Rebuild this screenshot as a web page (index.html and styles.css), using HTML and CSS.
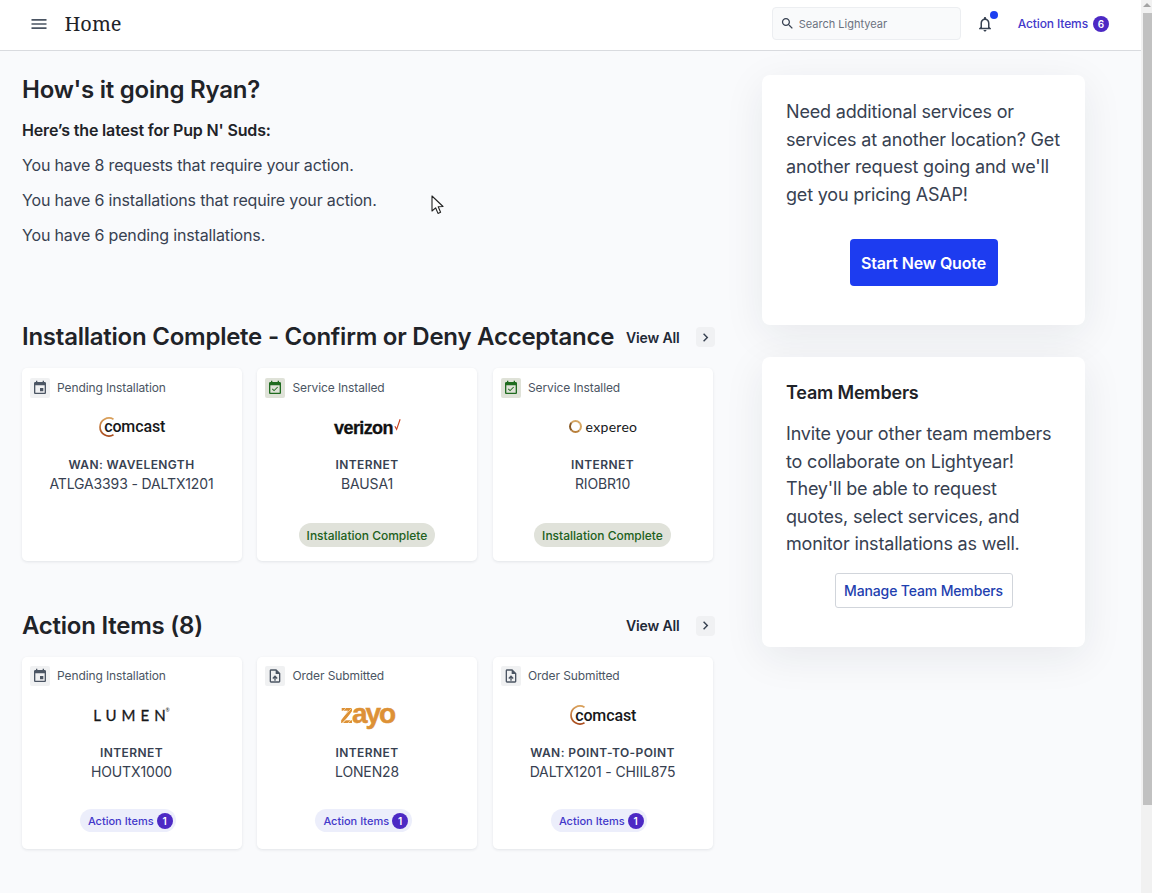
FILE: index.html
```html
<!DOCTYPE html>
<html lang="en">
<head>
<meta charset="utf-8">
<title>Home</title>
<link rel="stylesheet" href="styles.css">
</head>
<body>
<svg class="defs" width="0" height="0" aria-hidden="true">
  <defs>
    <linearGradient id="arc-grad" x1="0" y1="0" x2="0" y2="1"><stop offset="0" stop-color="#d9a05a"/><stop offset="1" stop-color="#a84a1c"/></linearGradient>
  </defs>
  <symbol id="i-event" viewBox="0 0 24 24"><path d="M17 12h-5v5h5v-5zM16 1v2H8V1H6v2H5c-1.11 0-1.99.9-1.99 2L3 19c0 1.1.89 2 2 2h14c1.1 0 2-.9 2-2V5c0-1.1-.9-2-2-2h-1V1h-2zm3 18H5V8h14v11z"/></symbol>
  <symbol id="i-done" viewBox="0 0 24 24"><path d="M16.53 11.06L15.47 10l-4.88 4.88-2.12-2.12-1.06 1.06L10.59 17l5.94-5.94zM19 3h-1V1h-2v2H8V1H6v2H5c-1.11 0-1.99.9-1.99 2L3 19c0 1.1.89 2 2 2h14c1.1 0 2-.9 2-2V5c0-1.1-.9-2-2-2zm0 16H5V8h14v11z"/></symbol>
  <symbol id="i-upload" viewBox="0 0 24 24"><path d="M14 2H6c-1.1 0-1.99.9-1.99 2L4 20c0 1.1.89 2 1.99 2H18c1.1 0 2-.9 2-2V8l-6-6zm4 18H6V4h7v5h5v11zM8 15.01l1.41 1.41L11 14.84V19h2v-4.16l1.59 1.59L16 15.01 12.01 11 8 15.01z"/></symbol>
  <symbol id="i-chev" viewBox="0 0 24 24"><path d="M10 6L8.59 7.41 13.17 12l-4.58 4.59L10 18l6-6z"/></symbol>
  <symbol id="i-arc" viewBox="0 0 20 20"><path d="M15.5 2.2A9 9 0 1 0 15.5 17.8" fill="none" stroke="url(#arc-grad)" stroke-width="1.7"/></symbol>
</svg>
<div class="window">
  <div class="page">
    <header class="topbar">
      <svg class="menu-icon" viewBox="0 0 24 24"><path d="M3 18h18v-2H3v2zm0-5h18v-2H3v2zm0-7v2h18V6H3z"/></svg>
      <div class="page-title">Home</div>
      <div class="search">
        <svg class="search-icon" viewBox="0 0 24 24"><path d="M15.5 14h-.79l-.28-.27C15.41 12.59 16 11.11 16 9.5 16 5.91 13.09 3 9.5 3S3 5.91 3 9.5 5.91 16 9.5 16c1.61 0 3.09-.59 4.23-1.57l.27.28v.79l5 4.99L20.49 19l-4.99-5zm-6 0C7.01 14 5 11.99 5 9.5S7.01 5 9.5 5 14 7.01 14 9.5 11.99 14 9.5 14z"/></svg>
        <span>Search Lightyear</span>
      </div>
      <div class="bell">
        <svg viewBox="0 0 24 24"><path d="M12 22c1.1 0 2-.9 2-2h-4c0 1.1.9 2 2 2zm6-6v-5c0-3.07-1.63-5.64-4.5-6.32V4c0-.83-.67-1.5-1.5-1.5s-1.5.67-1.5 1.5v.68C7.64 5.36 6 7.92 6 11v5l-2 2v1h16v-1l-2-2zm-2 1H8v-6c0-2.48 1.51-4.5 4-4.5s4 2.02 4 4.5v6z"/></svg>
        <span class="bell-dot"></span>
      </div>
      <div class="top-action">Action Items <span class="count count-top">6</span></div>
    </header>
    <main class="content">
      <div class="left">
        <section class="intro">
          <h1>How's it going Ryan?</h1>
          <p class="latest">Here’s the latest for Pup N' Suds:</p>
          <p>You have 8 requests that require your action.</p>
          <p>You have 6 installations that require your action.</p>
          <p>You have 6 pending installations.</p>
        </section>
        <section class="group">
          <div class="group-head">
            <h2>Installation Complete - Confirm or Deny Acceptance</h2>
            <div class="view-all"><span>View All</span><span class="chev"><svg viewBox="0 0 24 24"><use href="#i-chev"/></svg></span></div>
          </div>
          <div class="cards">
            <article class="card">
              <div class="status"><span class="status-icon"><svg viewBox="0 0 24 24"><use href="#i-event"/></svg></span>Pending Installation</div>
              <div class="logo"><span class="comcast"><svg viewBox="0 0 20 20"><use href="#i-arc"/></svg>comcast</span></div>
              <div class="kind">WAN: WAVELENGTH</div>
              <div class="site">ATLGA3393 - DALTX1201</div>
            </article>
            <article class="card">
              <div class="status"><span class="status-icon green"><svg viewBox="0 0 24 24"><use href="#i-done"/></svg></span>Service Installed</div>
              <div class="logo"><span class="verizon">verizon<svg viewBox="0 0 8 14"><path d="M1 9l2 3.5L7 1" fill="none" stroke="#c8401e" stroke-width="1.3"/></svg></span></div>
              <div class="kind">INTERNET</div>
              <div class="site">BAUSA1</div>
              <div class="pill pill-green">Installation Complete</div>
            </article>
            <article class="card">
              <div class="status"><span class="status-icon green"><svg viewBox="0 0 24 24"><use href="#i-done"/></svg></span>Service Installed</div>
              <div class="logo"><span class="expereo"><span class="ring"></span>expereo</span></div>
              <div class="kind">INTERNET</div>
              <div class="site">RIOBR10</div>
              <div class="pill pill-green">Installation Complete</div>
            </article>
          </div>
        </section>
        <section class="group group-actions">
          <div class="group-head">
            <h2>Action Items (8)</h2>
            <div class="view-all"><span>View All</span><span class="chev"><svg viewBox="0 0 24 24"><use href="#i-chev"/></svg></span></div>
          </div>
          <div class="cards">
            <article class="card">
              <div class="status"><span class="status-icon"><svg viewBox="0 0 24 24"><use href="#i-event"/></svg></span>Pending Installation</div>
              <div class="logo"><span class="lumen">LUME<span class="lumen-n">N</span><sup>®</sup></span></div>
              <div class="kind">INTERNET</div>
              <div class="site">HOUTX1000</div>
              <div class="pill pill-blue">Action Items <span class="count">1</span></div>
            </article>
            <article class="card">
              <div class="status"><span class="status-icon"><svg viewBox="0 0 24 24"><use href="#i-upload"/></svg></span>Order Submitted</div>
              <div class="logo"><span class="zayo"><span class="zayo-z">z</span>ayo</span></div>
              <div class="kind">INTERNET</div>
              <div class="site">LONEN28</div>
              <div class="pill pill-blue">Action Items <span class="count">1</span></div>
            </article>
            <article class="card">
              <div class="status"><span class="status-icon"><svg viewBox="0 0 24 24"><use href="#i-upload"/></svg></span>Order Submitted</div>
              <div class="logo"><span class="comcast"><svg viewBox="0 0 20 20"><use href="#i-arc"/></svg>comcast</span></div>
              <div class="kind">WAN: POINT-TO-POINT</div>
              <div class="site">DALTX1201 - CHIIL875</div>
              <div class="pill pill-blue">Action Items <span class="count">1</span></div>
            </article>
          </div>
        </section>
      </div>
      <aside class="right">
        <div class="panel panel-quote">
          <p>Need additional services or services at another location? Get another request going and we'll get you pricing ASAP!</p>
          <div class="panel-action"><button class="btn-primary">Start New Quote</button></div>
        </div>
        <div class="panel panel-team">
          <h3>Team Members</h3>
          <p>Invite your other team members to collaborate on Lightyear! They'll be able to request quotes, select services, and monitor installations as well.</p>
          <div class="panel-action"><button class="btn-outline">Manage Team Members</button></div>
        </div>
      </aside>
    </main>
  </div>
  <div class="scrollbar">
    <div class="scroll-up"></div>
    <div class="scroll-thumb"></div>
  </div>
</div>
<svg class="cursor" viewBox="0 0 13 20"><path d="M1 1v15l3.6-3.2 2.4 5.6 2.6-1.1-2.4-5.5 4.8-.3z" fill="#fff" stroke="#222" stroke-width="1.1" stroke-linejoin="round"/></svg>
</body>
</html>
```
FILE: styles.css
```css
* { box-sizing: border-box; }
html, body { margin: 0; height: 100%; overflow: hidden; }
body { font-family: Inter, "Liberation Sans", sans-serif; color: #1f2937; background: #f9fafc; }
.defs { position: absolute; }
.window { display: flex; height: 893px; }
.page { flex: 1; min-width: 0; }

.topbar { display: flex; align-items: center; height: 51px; padding-bottom: 2px; background: #fff; border-bottom: 1px solid #d9dbdf; }
.menu-icon { width: 20px; height: 20px; margin-left: 29px; fill: #4b5563; }
.page-title { margin-left: 15.5px; font-family: "Noto Serif", "Liberation Serif", serif; font-size: 20px; color: #1f2328; line-height: 24px; }
.search { display: flex; align-items: center; width: 189px; height: 33px; margin: 0 0 1px auto; padding-left: 7px; background: #f9fafb; border: 1px solid #eceef1; border-radius: 4px; font-size: 11px; color: #6b7280; }
.search-icon { width: 15px; height: 15px; margin-right: 4px; fill: #374151; }
.bell { position: relative; width: 18px; height: 18px; margin-left: 15px; }
.bell svg { display: block; width: 18px; height: 18px; fill: #374151; }
.bell-dot { position: absolute; top: -4.5px; right: -4px; width: 8px; height: 8px; border-radius: 50%; background: #1d3ff0; }
.top-action { display: flex; align-items: center; gap: 5px; margin: 0 32px 1px 24px; font-size: 12px; font-weight: 500; letter-spacing: -.01em; color: #4338ca; }
.count { display: inline-flex; align-items: center; justify-content: center; width: 16px; height: 16px; border-radius: 50%; background: #4c29c4; color: #fff; font-size: 10px; font-weight: 600; }

.content { display: flex; padding: 23px 0 0 22px; }
.left { width: 693px; }
.intro { height: 247px; }
h1 { margin: 0 0 12px; font-size: 24px; line-height: 32px; font-weight: 600; letter-spacing: -.01em; color: #1f2328; }
.intro p { margin: 0 0 11px; font-size: 16px; line-height: 24px; letter-spacing: -.01em; color: #374151; }
.intro .latest { font-weight: 600; color: #1f2328; }

.group-head { display: flex; align-items: center; justify-content: space-between; height: 32px; }
h2 { margin: 0; font-size: 24px; line-height: 32px; font-weight: 600; letter-spacing: -.01em; color: #1f2328; white-space: nowrap; }
.view-all { display: flex; align-items: center; gap: 16px; flex: none; font-size: 14px; font-weight: 600; letter-spacing: -.01em; color: #1f2937; }
.chev { display: flex; align-items: center; justify-content: center; width: 19.5px; height: 20px; background: #f0f1f3; border-radius: 4px; }
.chev svg { width: 17px; height: 17px; fill: #374151; }

.cards { display: grid; grid-template-columns: repeat(3, 220px); gap: 15.5px; margin: 15px 0 0 -.5px; }
.group-actions { margin-top: 49px; }
.card { display: flex; flex-direction: column; align-items: center; height: 192.5px; padding: 9.5px 8px 15px; background: #fff; border-radius: 5px; box-shadow: 0 1px 3px rgba(31, 41, 55, .1); }
.status { display: flex; align-items: center; align-self: stretch; gap: 7.5px; font-size: 12px; line-height: 20px; letter-spacing: -.1px; color: #4b5563; }
.status-icon { display: flex; align-items: center; justify-content: center; width: 20px; height: 20px; background: #f0f1f2; border-radius: 2px; }
.status-icon svg { width: 16px; height: 16px; fill: #4b5563; }
.status-icon.green { background: #dfe2d8; }
.status-icon.green svg { fill: #1f6b1f; }

.logo { display: flex; align-items: center; justify-content: center; height: 30px; margin-top: 14px; }
.comcast { display: inline-flex; align-items: center; font-family: Roboto, sans-serif; font-weight: 500; font-size: 16px; letter-spacing: -.1px; color: #17181a; }
.comcast svg { width: 20px; height: 20px; margin-right: -13.5px; }
.verizon { display: inline-flex; align-items: flex-start; margin: 3px 0 0 1px; font-family: "Liberation Sans", sans-serif; font-weight: 700; font-size: 18px; letter-spacing: -.6px; color: #111; -webkit-text-stroke: .3px #111; }
.verizon svg { width: 7px; height: 13px; margin-left: 1px; }
.expereo { display: inline-flex; align-items: center; gap: 4px; margin-left: 1px; font-family: Lato, sans-serif; font-size: 14px; letter-spacing: .3px; color: #17181a; }
.ring { width: 13px; height: 13px; border-radius: 50%; border: 2.5px solid #d6a662; border-left-color: #8a5a24; border-bottom-color: #b87f3a; }
.lumen { display: inline-flex; font-family: Lato, sans-serif; font-size: 15px; letter-spacing: 5px; color: #17181a; -webkit-text-stroke: .3px #17181a; }
.lumen-n { letter-spacing: 0; }
.lumen sup { font-size: 5px; letter-spacing: 0; line-height: 8px; -webkit-text-stroke: 0; }
.zayo { margin-top: -2px; font-family: "Liberation Sans", sans-serif; font-weight: 700; font-size: 28px; letter-spacing: -2px; color: #dd9136; line-height: 24px; -webkit-text-stroke: .5px #dd9136; }
.zayo-z { color: transparent; background: repeating-linear-gradient(135deg, #dd9136 0 3px, #f0c890 3px 4px); -webkit-background-clip: text; background-clip: text; -webkit-text-stroke: 0; }

.kind { margin-top: 14px; font-size: 12px; line-height: 18px; font-weight: 600; letter-spacing: .4px; color: #374151; }
.site { margin-top: 0; font-size: 14px; line-height: 20px; letter-spacing: -.01em; color: #374151; }
.pill { display: flex; align-items: center; margin-top: auto; border-radius: 12px; font-size: 12px; white-space: nowrap; }
.pill-green { height: 24px; margin-bottom: -1.5px; padding: 0 8px; background: #e0e2da; color: #206020; font-weight: 500; }
.pill-blue { gap: 3px; height: 23px; margin: auto 7px 2px 0; padding: 0 3.5px 0 8px; background: #eceefb; color: #4338ca; font-size: 11px; font-weight: 500; }

.right { width: 323px; margin: 1px 0 0 47px; }
.panel { margin-bottom: 32px; padding: 23px 24px; background: #fff; border-radius: 8px; box-shadow: 0 10px 40px rgba(31, 41, 55, .08); }
.panel p { margin: 0; font-size: 18px; line-height: 27.5px; letter-spacing: -.01em; color: #374151; }
.panel-quote { height: 250px; }
.panel-team { height: 290px; }
.panel-action { display: flex; justify-content: center; }
h3 { margin: 0 0 14px; font-size: 18px; line-height: 26px; font-weight: 600; letter-spacing: -.01em; color: #1f2328; }
.btn-primary { width: 148px; height: 47px; margin-top: 31px; background: #1d3cf0; color: #fff; border: 0; border-radius: 4px; font: 600 16px Inter, sans-serif; letter-spacing: -.01em; }
.btn-outline { width: 178px; height: 35px; margin-top: 15px; background: #fff; color: #1e40af; border: 1px solid #d1d5db; border-radius: 3px; font: 500 14px Inter, sans-serif; letter-spacing: -.01em; }

.scrollbar { flex: none; width: 11px; background: #f1f1f1; }
.scroll-up { height: 13px; position: relative; }
.scroll-up::after { content: ""; position: absolute; left: 2px; top: 3px; border: 4px solid transparent; border-top: 0; border-bottom: 4px solid #a3a3a3; }
.scroll-thumb { height: 792px; margin-left: 2px; background: #c1c1c1; }

.cursor { position: absolute; left: 431px; top: 195px; width: 13px; height: 20px; }
```
